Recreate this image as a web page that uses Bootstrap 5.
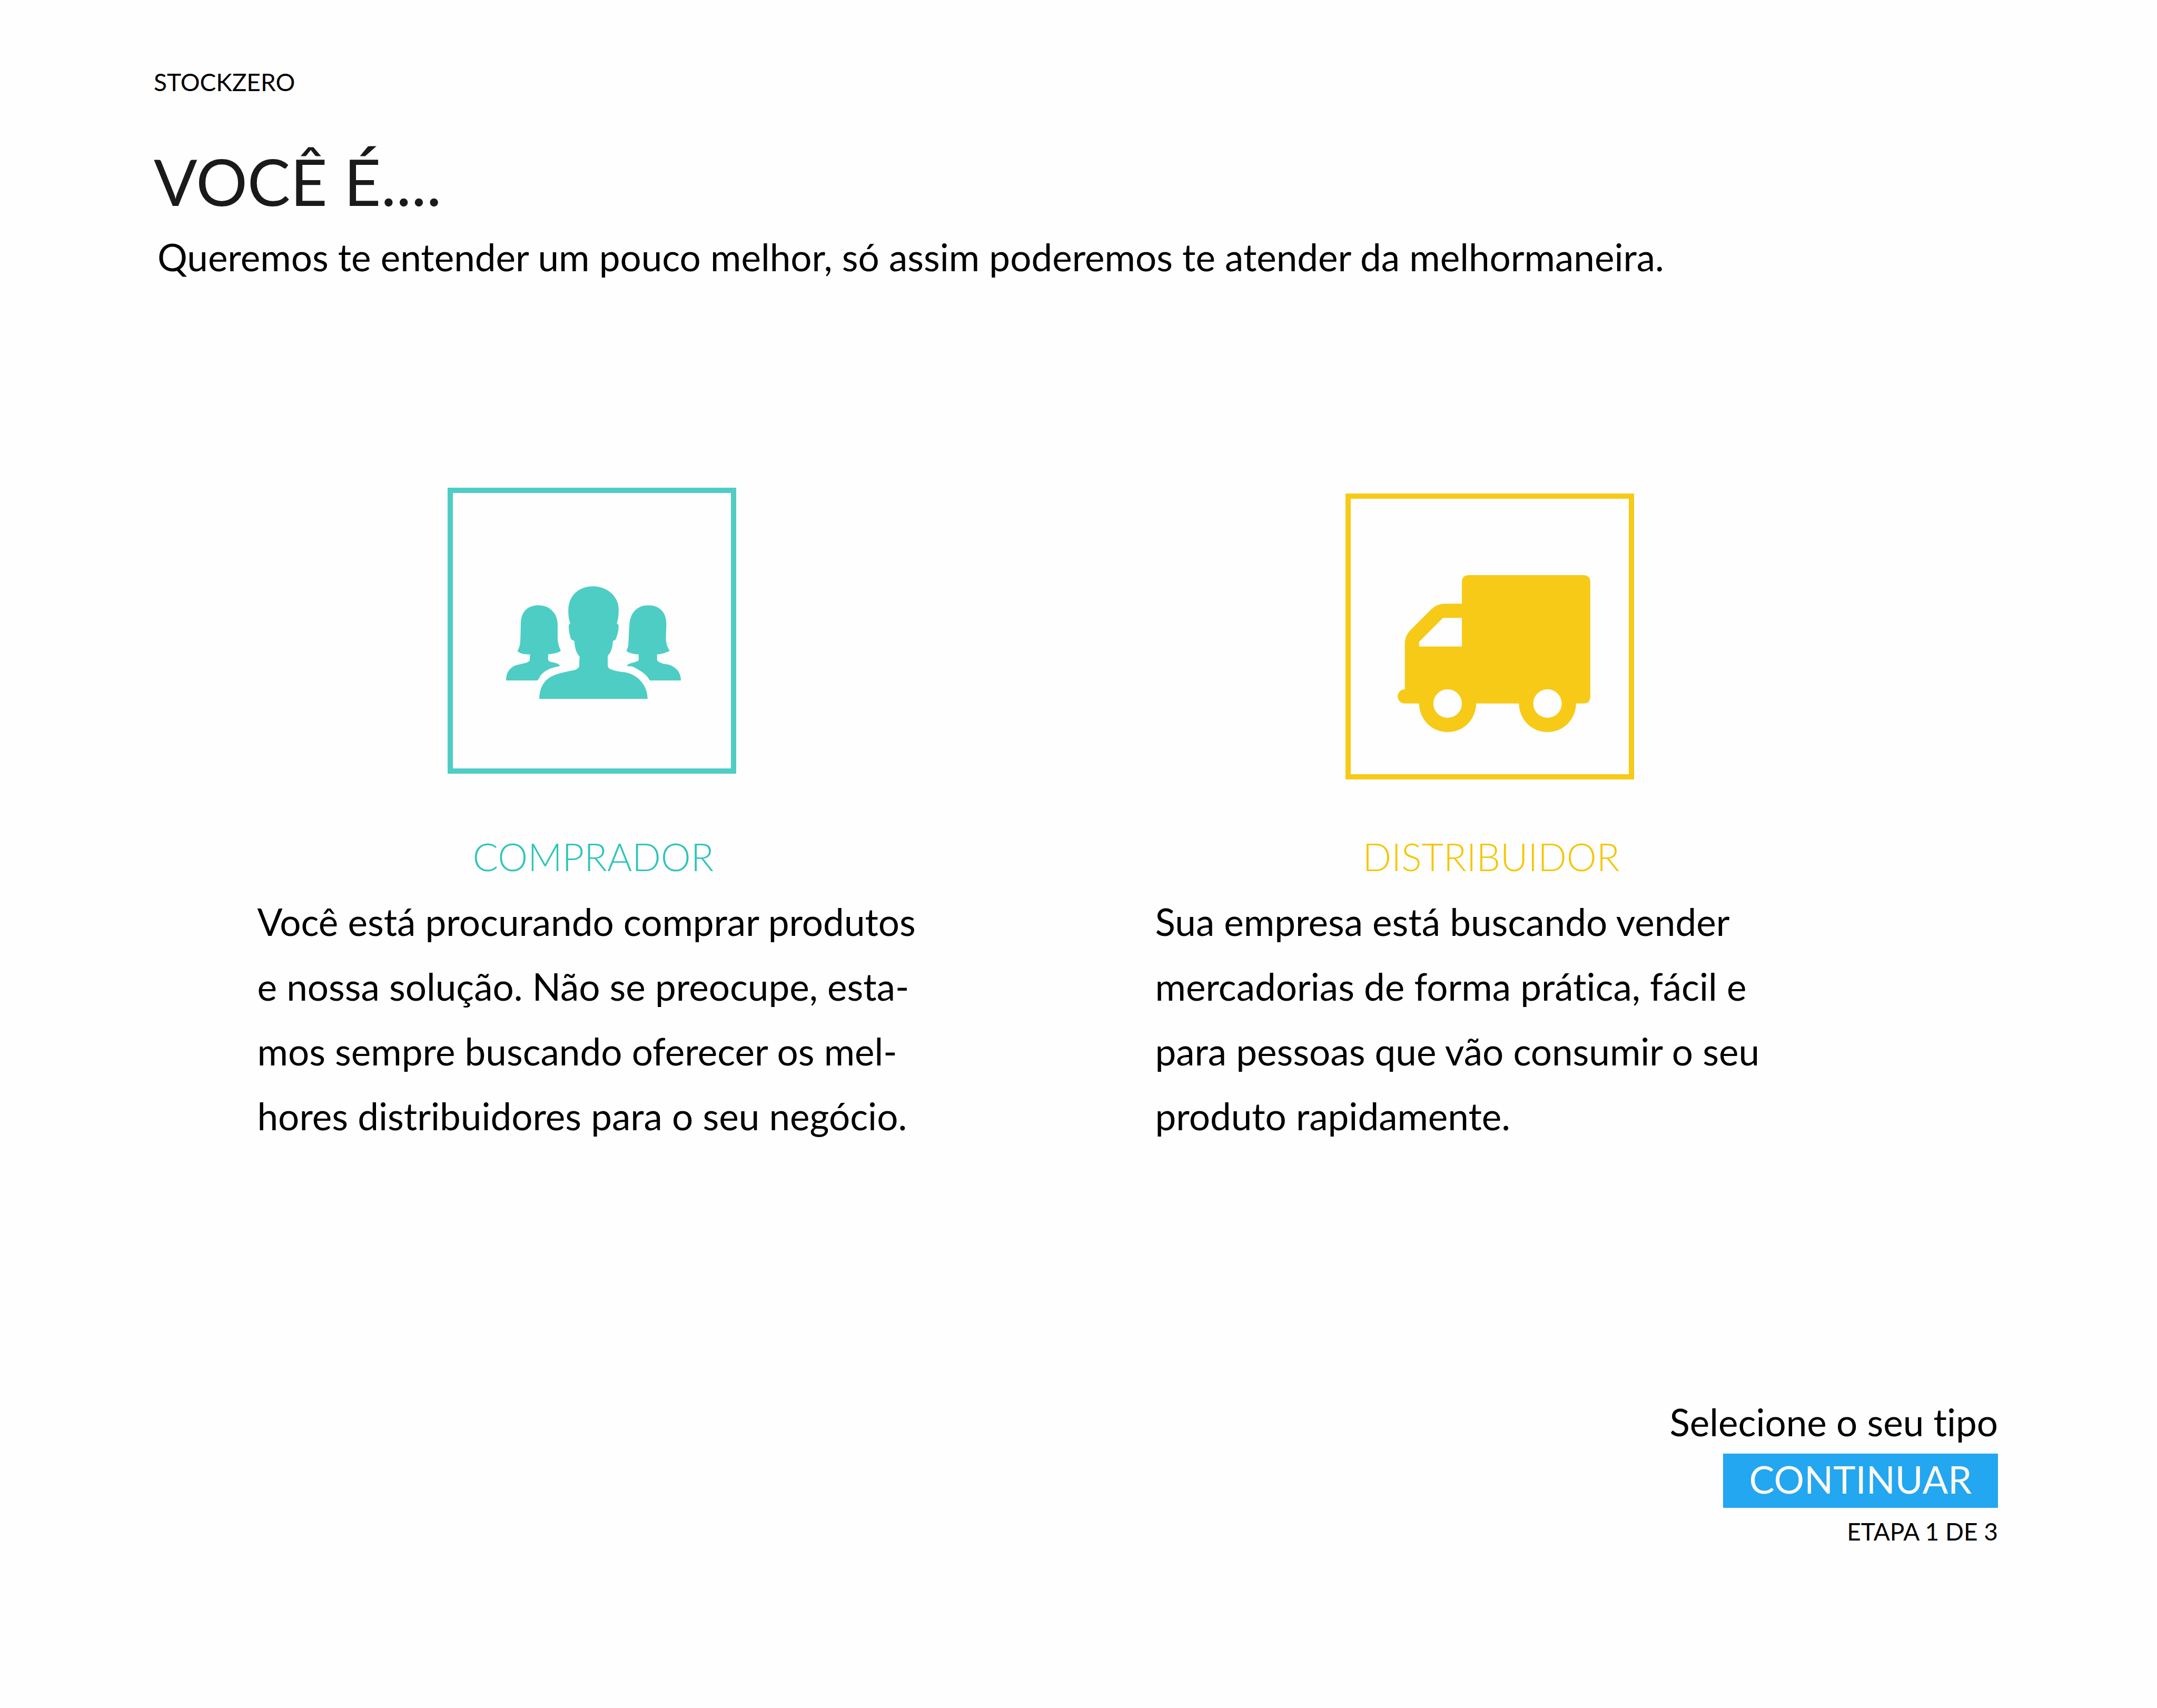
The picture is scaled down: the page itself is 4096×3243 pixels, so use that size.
<!DOCTYPE html>
<html lang="pt-BR">
<head>
<meta charset="utf-8">
<meta name="viewport" content="width=device-width, initial-scale=1">
<title>StockZero</title>
<link href="https://cdn.jsdelivr.net/npm/bootstrap@5.3.0/dist/css/bootstrap.min.css" rel="stylesheet">
<style>
  body { font-family: Lato, sans-serif; font-size: 71px; line-height: 88px; color: #000; background: #fefefe; font-variant-ligatures: no-common-ligatures; }
  .page-head { padding: 128px 302px 0 292px; }
  .fine-print { font-size: 46px; line-height: 56px; }
  .headline { font-size: 122px; line-height: 148px; font-weight: 400; color: #1a1a1a; margin: 86px 0 26px; }
  .intro { padding-left: 7px; }
  .choices { padding: 394px 415px 0 271px; }
  .frame-area { height: 554px; }
  .frame { width: 548px; height: 543px; border: 10px solid currentColor; }
  .buyer { color: #4ecdc4; }
  .seller { color: #f7ca18; }
  .buyer .frame { padding: 45px 0 0 6px; }
  .seller .frame { padding: 65px 0 0 17px; }
  .choice-title { font-size: 72px; line-height: 88px; font-weight: 300; margin: 102px 0 18px; padding-left: 6px; }
  .buyer .choice-title { color: #2fc5b9; }
  .seller .choice-title { color: #f7c500; }
  .choice-text { width: 1270px; line-height: 123px; color: #000; }
  .page-foot { padding: 0 302px 307px; }
  .btn-next { --bs-btn-bg: #22a7f0; --bs-btn-color: #fff9f3; --bs-btn-hover-bg: #1b95d9; --bs-btn-hover-color: #fff9f3;
    width: 522px; height: 103px; padding: 0 0 8px; border: 0; font-size: 72px; line-height: 88px; margin: 16px 0 17px; }
</style>
<script src="https://cdn.jsdelivr.net/npm/bootstrap@5.3.0/dist/js/bootstrap.bundle.min.js"></script>
</head>
<body>
<div class="d-flex flex-column min-vh-100">
  <header class="page-head">
    <div class="fine-print">STOCKZERO</div>
    <h1 class="headline">VOCÊ É....</h1>
    <p class="intro mb-0">Queremos te entender um pouco melhor, só assim poderemos te atender da melhormaneira.</p>
  </header>

  <main class="choices">
    <div class="row g-0">
      <section class="col-6 d-flex flex-column align-items-center buyer">
        <div class="frame-area d-flex align-items-start">
          <div class="frame d-flex align-items-center justify-content-center">
            <svg width="332" height="214" viewBox="107 86 1261 812" fill="currentColor" aria-hidden="true">
              <path d="M347 898C347 820 382 764 432 738C470 718 510 710 545 702C578 694 592 695 610 687C627 679 635 670 635 655C633 630 638 615 637 593C610 562 603 530 599 480C585 476 577 472 573 460C563 425 558 400 559 372C560 362 564 358 570 355C560 325 556 300 556 262C556 150 635 87 735 87C835 87 919 160 919 250C919 300 915 325 906 355C914 358 918 362 919 372C919 402 913 425 903 455C898 472 893 476 878 480C873 530 868 558 840 588V650C840 672 848 679 862 685C900 701 940 703 970 708C1060 725 1128 805 1128 898Z"/>
              <path d="M107 765C107 700 143 663 190 652C225 645 245 640 262 634C280 626 278 620 278 606L280 577C240 579 212 573 190 556C192 545 205 525 208 500C213 450 211 390 214 345C218 265 265 223 341 223C420 223 478 280 479 360V460C480 500 492 530 502 552C480 568 445 574 410 577V608C410 624 418 629 436 633C470 641 492 645 494 663C420 672 365 706 347 745C342 755 338 765 331 765Z"/>
              <path d="M1368 765C1368 705 1330 667 1284 652C1260 646 1240 648 1215 634C1197 626 1196 622 1196 606V577C1232 577 1262 564 1288 552C1270 525 1261 500 1260 465C1260 430 1263 400 1263 355C1263 270 1210 223 1132 223C1050 223 1000 280 997 365C991 420 993 480 987 520C983 538 977 536 977 556C1005 572 1035 577 1063 577V620C1050 635 980 640 980 660C990 666 1005 662 1021 666C1065 690 1118 715 1143 765Z"/>
            </svg>
          </div>
        </div>
        <h2 class="choice-title">COMPRADOR</h2>
        <p class="choice-text mb-0">Você está procurando comprar produtos<br>e nossa solução. Não se preocupe, esta-<br>mos sempre buscando oferecer os mel-<br>hores distribuidores para o seu negócio.</p>
      </section>

      <section class="col-6 d-flex flex-column align-items-center seller">
        <div class="frame-area d-flex align-items-end">
          <div class="frame d-flex align-items-center justify-content-center">
            <svg width="366" height="298" viewBox="0 0 27 22" fill="currentColor" fill-rule="evenodd" aria-hidden="true">
              <path d="M9 4V1Q9 0 10 0H26Q27 0 27 1V17Q27 18 26 18H25A4 4 0 0 1 17 18H11A4 4 0 0 1 3 18H1A1 1 0 0 1 1 16V9.600Q1 8.500 1.800 7.700L4.700 4.800Q5.500 4 6.600 4ZM9 6H6.350L3 9.350V10H9ZM7 16A2 2 0 0 0 7 20A2 2 0 0 0 7 16ZM21 16A2 2 0 0 0 21 20A2 2 0 0 0 21 16Z"/>
            </svg>
          </div>
        </div>
        <h2 class="choice-title">DISTRIBUIDOR</h2>
        <p class="choice-text mb-0">Sua empresa está buscando vender<br>mercadorias de forma prática, fácil e<br>para pessoas que vão consumir o seu<br>produto rapidamente.</p>
      </section>
    </div>
  </main>

  <footer class="page-foot mt-auto d-flex flex-column align-items-end">
    <div>Selecione o seu tipo</div>
    <button type="button" class="btn btn-next rounded-0">CONTINUAR</button>
    <div class="fine-print">ETAPA 1 DE 3</div>
  </footer>
</div>
</body>
</html>
